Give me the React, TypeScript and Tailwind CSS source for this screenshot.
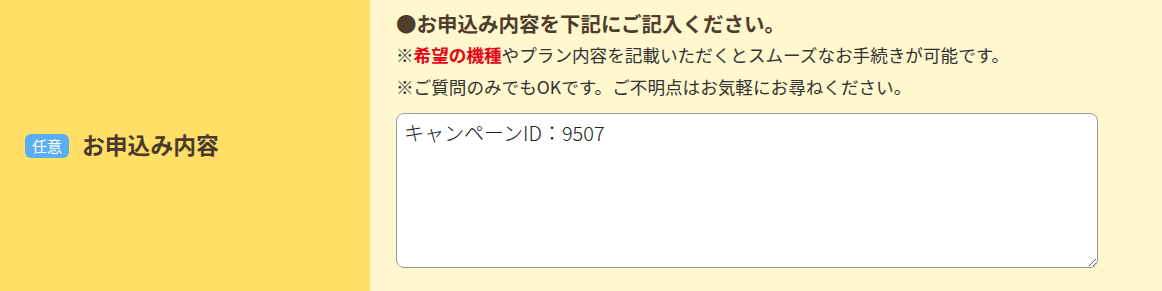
export default function App() {
  const jp = { fontFamily: '"Noto Sans CJK JP", "Noto Sans", sans-serif' };
  return (
    <div className="flex w-[1162px] h-[291px]" style={jp}>
      {/* label column */}
      <div className="w-[370px] shrink-0 bg-[#ffdf66] flex items-center pl-[25px] gap-[13px]">
        <span className="w-[44px] h-[24px] rounded-[6px] bg-[#5aaff3] text-white text-[15px] leading-[24px] text-center">
          任意
        </span>
        <span className="text-[22.8px] font-bold text-[#4a3a2c] leading-none">お申込み内容</span>
      </div>

      {/* input column */}
      <div className="flex-1 bg-[#fff8ce] pl-[26px] pt-[8px]">
        <p className="text-[20.5px] font-bold leading-[30px] text-[#4f3c2d]">●お申込み内容を下記にご記入ください。</p>
        <p className="text-[17.6px] leading-[32px] text-[#333333] mt-[1px]">
          ※<span className="font-bold text-[#e60012]">希望の機種</span>やプラン内容を記載いただくとスムーズなお手続きが可能です。
        </p>
        <p className="text-[17.6px] leading-[32px] text-[#333333]">
          ※ご質問のみでもOKです。ご不明点はお気軽にお尋ねください。
        </p>
        <textarea
          defaultValue="キャンペーンID：9507"
          className="block mt-[10px] w-[702px] h-[155px] bg-white border border-[#999999] rounded-[8px] px-[7px] py-[4px] text-[20px] leading-[30px] text-[#222222] font-light outline-none"
        />
      </div>
    </div>
  );
}
